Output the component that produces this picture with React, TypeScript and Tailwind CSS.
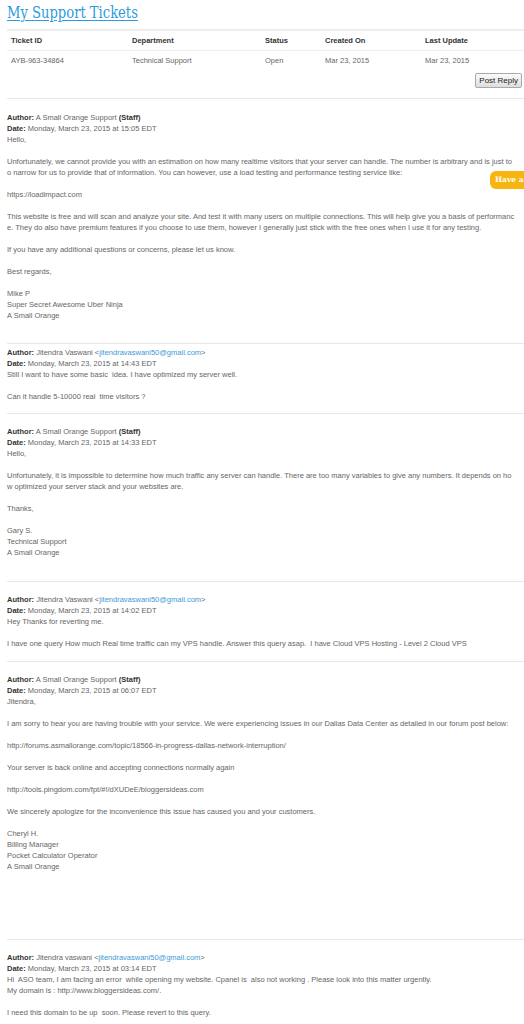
import React from "react";

const L = ({ children }: { children?: React.ReactNode }) => (
  <div className="h-[11px] leading-[11px] whitespace-pre">{children}</div>
);
const B = () => <div className="h-[11px]" />;

const Email = ({ addr }: { addr: string }) => (
  <>
    {"<"}
    <span className="text-[#3d9ad6]">{addr}</span>
    {">"}
  </>
);

const Head = ({ author, date }: { author: React.ReactNode; date: string }) => (
  <>
    <L>
      <b className="font-bold text-[#333]">Author:</b> {author}
    </L>
    <L>
      <b className="font-bold text-[#333]">Date:</b> {date}
    </L>
  </>
);

const Staff = (
  <>
    A Small Orange Support <b className="font-bold text-[#333]">(Staff)</b>
  </>
);

export default function App() {
  return (
    <div
      className="relative w-[524px] min-h-[1024px] overflow-hidden bg-white text-[7.5px] text-[#666]"
      style={{ fontFamily: '"Liberation Sans", Arial, sans-serif' }}
    >
      <div className="pl-[7px]">
        {/* Title */}
        <div className="h-[29px] pt-[3px]">
          <a
            className="inline-block origin-left scale-x-[0.82] text-[16px] leading-[20px] text-[#2d9bdc] underline decoration-1 underline-offset-2"
            style={{ fontFamily: '"DejaVu Serif", serif' }}
          >
            My Support Tickets
          </a>
        </div>

        {/* Table */}
        <div className="border-t-2 border-[#eeeeee]">
          <div className="grid h-[20px] grid-cols-[121px_133px_60px_100px_1fr] items-center border-b border-[#eeeeee] pl-[4px] font-bold text-[#333]">
            <div>Ticket ID</div>
            <div>Department</div>
            <div>Status</div>
            <div>Created On</div>
            <div>Last Update</div>
          </div>
          <div className="grid h-[20px] grid-cols-[121px_133px_60px_100px_1fr] items-center pl-[4px]">
            <div>AYB-963-34864</div>
            <div>Technical Support</div>
            <div>Open</div>
            <div>Mar 23, 2015</div>
            <div>Mar 23, 2015</div>
          </div>
        </div>
        <div className="mt-[2px] mb-[10px] flex justify-end pr-[2px]">
          <button
            className="h-[15px] rounded-[2px] border border-[#a9a9a9] bg-gradient-to-b from-[#fbfbfb] to-[#dedede] px-[3px] text-[8px] leading-[13px] text-[#222]"
            style={{ fontFamily: '"Liberation Sans", Arial, sans-serif' }}
          >
            Post Reply
          </button>
        </div>

        {/* Message 1 */}
        <div className="border-t border-[#e8e8e8] pt-[13px] pb-[11px]">
          <Head author={Staff} date="Monday, March 23, 2015 at 15:05 EDT" />
          <L>Hello,</L>
          <B />
          <L>Unfortunately, we cannot provide you with an estimation on how many realtime visitors that your server can handle. The number is arbitrary and is just to</L>
          <L>o narrow for us to provide that of information. You can however, use a load testing and performance testing service like:</L>
          <B />
          <L>https://loadimpact.com</L>
          <B />
          <L>This website is free and will scan and analyze your site. And test it with many users on multiple connections. This will help give you a basis of performanc</L>
          <L>e. They do also have premium features if you choose to use them, however I generally just stick with the free ones when I use it for any testing.</L>
          <B />
          <L>If you have any additional questions or concerns, please let us know.</L>
          <B />
          <L>Best regards,</L>
          <B />
          <L>Mike P</L>
          <L>Super Secret Awesome Uber Ninja</L>
          <L>A Small Orange</L>
          <B />
        </div>

        {/* Message 2 */}
        <div className="border-t border-[#e8e8e8] pt-[3px] pb-[11px]">
          <Head
            author={<>Jitendra Vaswani <Email addr="jitendravaswani50@gmail.com" /></>}
            date="Monday, March 23, 2015 at 14:43 EDT"
          />
          <L>Still I want to have some basic  idea. I have optimized my server well.</L>
          <B />
          <L>Can it handle 5-10000 real  time visitors ?</L>
        </div>

        {/* Message 3 */}
        <div className="border-t border-[#e8e8e8] pt-[12px] pb-[12px]">
          <Head author={Staff} date="Monday, March 23, 2015 at 14:33 EDT" />
          <L>Hello,</L>
          <B />
          <L>Unfortunately, it is impossible to determine how much traffic any server can handle. There are too many variables to give any numbers. It depends on ho</L>
          <L>w optimized your server stack and your websites are.</L>
          <B />
          <L>Thanks,</L>
          <B />
          <L>Gary S.</L>
          <L>Technical Support</L>
          <L>A Small Orange</L>
          <B />
        </div>

        {/* Message 4 */}
        <div className="border-t border-[#e8e8e8] pt-[12px] pb-[12px]">
          <Head
            author={<>Jitendra Vaswani <Email addr="jitendravaswani50@gmail.com" /></>}
            date="Monday, March 23, 2015 at 14:02 EDT"
          />
          <L>Hey Thanks for reverting me.</L>
          <B />
          <L>I have one query How much Real time traffic can my VPS handle. Answer this query asap.  I have Cloud VPS Hosting - Level 2 Cloud VPS</L>
        </div>

        {/* Message 5 */}
        <div className="border-t border-[#e8e8e8] pt-[12px] pb-[67px]">
          <Head author={Staff} date="Monday, March 23, 2015 at 06:07 EDT" />
          <L>Jitendra,</L>
          <B />
          <L>I am sorry to hear you are having trouble with your service. We were experiencing issues in our Dallas Data Center as detailed in our forum post below:</L>
          <B />
          <L>http://forums.asmallorange.com/topic/18566-in-progress-dallas-network-interruption/</L>
          <B />
          <L>Your server is back online and accepting connections normally again</L>
          <B />
          <L>http://tools.pingdom.com/fpt/#!/dXUDeE/bloggersideas.com</L>
          <B />
          <L>We sincerely apologize for the inconvenience this issue has caused you and your customers.</L>
          <B />
          <L>Cheryl H.</L>
          <L>Billing Manager</L>
          <L>Pocket Calculator Operator</L>
          <L>A Small Orange</L>
        </div>

        {/* Message 6 */}
        <div className="border-t border-[#e8e8e8] pt-[12px] pb-[11px]">
          <Head
            author={<>Jitendra vaswani <Email addr="jitendravaswani50@gmail.com" /></>}
            date="Monday, March 23, 2015 at 03:14 EDT"
          />
          <L>Hi  ASO team, I am facing an error  while opening my website. Cpanel is  also not working . Please look into this matter urgently.</L>
          <L>My domain is : http://www.bloggersideas.com/.</L>
          <B />
          <L>I need this domain to be up  soon. Please revert to this query.</L>
        </div>
      </div>

      {/* Feedback tab */}
      <div
        className="absolute left-[490px] top-[171px] flex h-[18px] w-[34px] items-center rounded-l-[6px] bg-[#f7b50f] pl-[5px] text-[7.5px] font-bold text-white whitespace-nowrap"
        style={{ fontFamily: '"DejaVu Serif", Georgia, serif' }}
      >
        Have a
      </div>
    </div>
  );
}
